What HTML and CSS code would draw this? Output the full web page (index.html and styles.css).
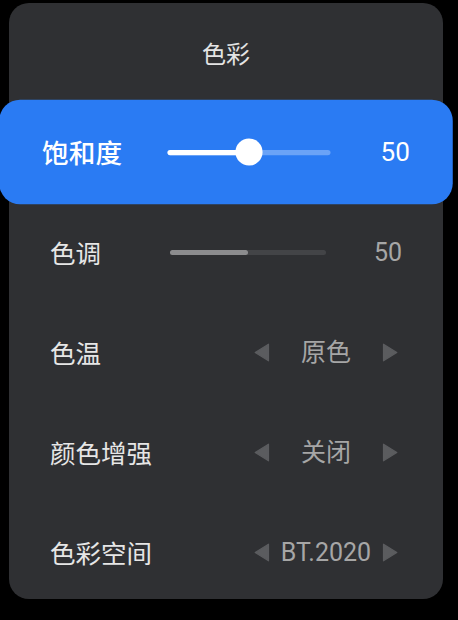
FILE: index.html
```html
<!DOCTYPE html>
<html lang="zh">
<head>
<meta charset="utf-8">
<title>色彩</title>
<link rel="stylesheet" href="styles.css">
</head>
<body>
<div class="panel">
  <div class="title">色彩</div>

  <div class="row focused">
    <span class="label">饱和度</span>
    <div class="slider">
      <div class="track"><div class="fill" style="width:50%"></div><div class="thumb" style="left:50%"></div></div>
      <span class="value">50</span>
    </div>
  </div>

  <div class="row">
    <span class="label">色调</span>
    <div class="slider">
      <div class="track"><div class="fill" style="width:50%"></div></div>
      <span class="value">50</span>
    </div>
  </div>

  <div class="row">
    <span class="label">色温</span>
    <div class="selector">
      <svg class="arrow" viewBox="0 0 16 19"><polygon points="14.5,1.2 14.5,17.8 1.2,9.5"/></svg>
      <span class="option">原色</span>
      <svg class="arrow" viewBox="0 0 16 19"><polygon points="1.5,1.2 1.5,17.8 14.8,9.5"/></svg>
    </div>
  </div>

  <div class="row">
    <span class="label">颜色增强</span>
    <div class="selector">
      <svg class="arrow" viewBox="0 0 16 19"><polygon points="14.5,1.2 14.5,17.8 1.2,9.5"/></svg>
      <span class="option">关闭</span>
      <svg class="arrow" viewBox="0 0 16 19"><polygon points="1.5,1.2 1.5,17.8 14.8,9.5"/></svg>
    </div>
  </div>

  <div class="row">
    <span class="label">色彩空间</span>
    <div class="selector">
      <svg class="arrow" viewBox="0 0 16 19"><polygon points="14.5,1.2 14.5,17.8 1.2,9.5"/></svg>
      <span class="option">BT.2020</span>
      <svg class="arrow" viewBox="0 0 16 19"><polygon points="1.5,1.2 1.5,17.8 14.8,9.5"/></svg>
    </div>
  </div>
</div>
</body>
</html>
```

FILE: styles.css
```css
html, body {
  margin: 0;
  padding: 0;
  background: #000;
}

body {
  width: 458px;
  height: 620px;
  overflow: hidden;
  font-family: "Noto Sans CJK SC", "Noto Sans", sans-serif;
}

.panel {
  margin: 3px 0 0 9px;
  width: 434px;
  height: 596px;
  background: #2f3033;
  border-radius: 20px;
  display: flex;
  flex-direction: column;
}

.title {
  height: 99px;
  display: flex;
  align-items: center;
  justify-content: center;
  font-size: 24px;
  line-height: 1;
  color: #e4e4e4;
  flex-shrink: 0;
}

.row {
  height: 100px;
  flex-shrink: 0;
  display: flex;
  align-items: center;
  justify-content: space-between;
  padding: 0 41px;
  box-sizing: border-box;
  border-radius: 20px;
}

.label {
  font-size: 25.5px;
  line-height: 1;
  color: #e6e6e6;
}

.slider {
  display: flex;
  align-items: center;
}

.track {
  position: relative;
  width: 156px;
  height: 5px;
  border-radius: 3px;
  background: #434447;
}

.fill {
  height: 100%;
  border-radius: 3px;
  background: #8c8c8e;
}

.value {
  width: 76px;
  text-align: right;
  font-family: Roboto, "Noto Sans CJK SC", sans-serif;
  font-size: 25px;
  line-height: 1;
  color: #a6a6a6;
}

.selector {
  display: flex;
  align-items: center;
  width: 144px;
  margin-right: 4px;
}

.arrow {
  width: 16px;
  height: 19px;
  flex-shrink: 0;
  fill: #5b5c5f;
  stroke: #5b5c5f;
  stroke-width: 1.2;
  stroke-linejoin: round;
}

.option {
  flex: 1;
  text-align: center;
  font-family: Roboto, "Noto Sans CJK SC", sans-serif;
  font-size: 25px;
  line-height: 1;
  color: #a6a6a6;
}

/* focused row */
.focused {
  background: #2a7bf3;
  transform: scale(1.045);
}

.focused .label {
  color: #fff;
  font-weight: 500;
}

.focused .track {
  background: #6aa3f7;
}

.focused .fill {
  background: #fff;
}

.focused .thumb {
  position: absolute;
  top: 50%;
  width: 26px;
  height: 26px;
  margin: -13px 0 0 -13px;
  border-radius: 50%;
  background: #fff;
}

.focused .value {
  color: #fff;
}
```
